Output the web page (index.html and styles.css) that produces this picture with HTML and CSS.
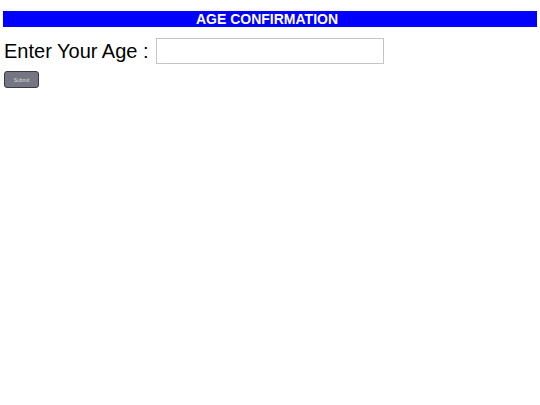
FILE: index.html
```html
<!DOCTYPE html>
<html>
<head>
<meta charset="utf-8">
<link rel="stylesheet" href="styles.css">
</head>
<body>
<h1 class="title">AGE CONFIRMATION</h1>
<form class="form">
  <div class="row">
    <label class="label" for="age">Enter Your Age :</label>
    <input class="age" id="age" type="text">
  </div>
  <button class="submit" type="button">Submit</button>
</form>
</body>
</html>
```
FILE: styles.css
```css
body {
  margin: 11px 3px;
  font-family: "Liberation Sans", Arial, sans-serif;
  background: #fff;
}
.title {
  margin: 0;
  padding-right: 6px;
  background: #0000ff;
  color: #fff;
  font-size: 14px;
  line-height: 16px;
  height: 16px;
  text-align: center;
  font-weight: bold;
}
.form {
  margin: 0;
  padding-left: 1px;
}
.row {
  display: flex;
  align-items: center;
  margin-top: 11px;
  gap: 7px;
}
.label {
  font-size: 20px;
  color: #000;
}
.age {
  width: 224px;
  height: 22px;
  border: 1px solid #c4c4c4;
  padding: 1px;
  box-sizing: content-box;
  margin: 0;
}
.submit {
  display: block;
  margin-top: 7px;
  width: 35px;
  height: 17px;
  padding: 0;
  font-size: 5px;
  color: #ddd;
  background: #757584;
  border: 1px solid #3a3a44;
  border-radius: 3px;
}
```
